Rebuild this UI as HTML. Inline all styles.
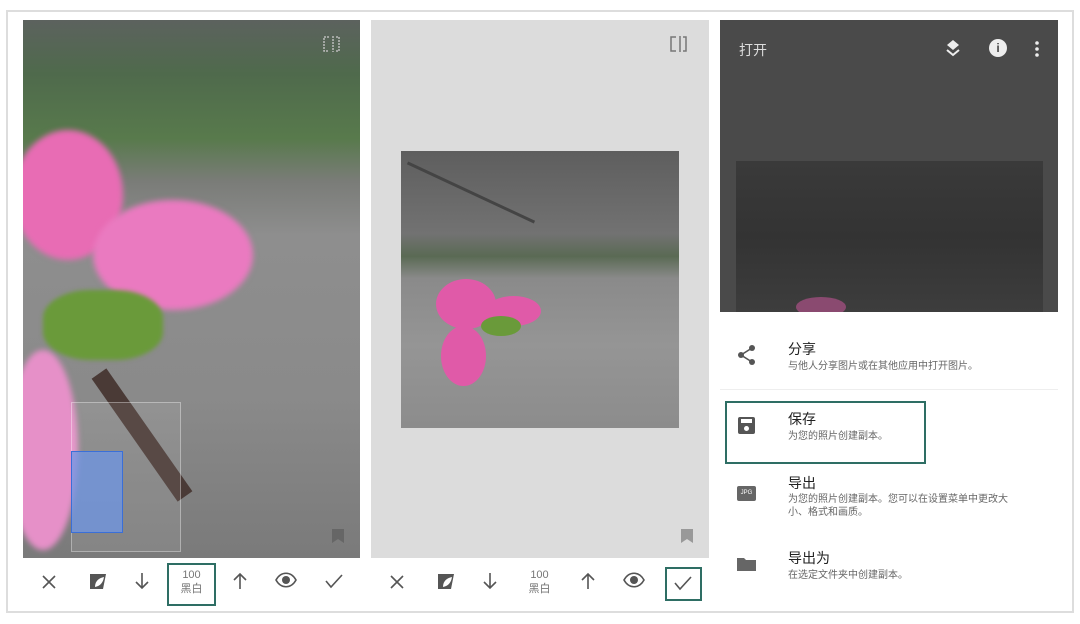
<!DOCTYPE html>
<html><head><meta charset="utf-8"><style>
*{margin:0;padding:0;box-sizing:border-box}
body{width:1080px;height:624px;background:#fff;position:relative;overflow:hidden;font-family:"Liberation Sans","Noto Sans CJK SC",sans-serif}
.a{position:absolute}
.frame{left:6px;top:10px;width:1068px;height:603px;border:2px solid #ddd}
.p1{left:23px;top:20px;width:337px;height:538px;overflow:hidden;background:linear-gradient(180deg,#5c625e 0%,#4f6a4c 10%,#587a4c 22%,#7a7c78 30%,#8e8e8e 40%,#8a8a8a 70%,#7a7a7a 100%)}
.p2{left:371px;top:20px;width:338px;height:538px;background:#dcdcdc}
.img2{left:401px;top:151px;width:278px;height:277px;overflow:hidden;background:linear-gradient(180deg,#5e5e5e 0%,#727272 30%,#5a6a54 38%,#8a8a8a 46%,#959595 70%,#8c8c8c 100%)}
.p3{left:720px;top:20px;width:338px;height:292px;background:#4a4a4a}
.img3{left:736px;top:161px;width:307px;height:151px;overflow:hidden;background:linear-gradient(180deg,#3a3a3a,#333 50%,#3d3d3d)}
.pk{border-radius:50%;background:#e05aa8}
.menu .t{font-size:14px;color:#222}
.menu .s{font-size:10px;color:#666;line-height:13px}
.box{border:2px solid #2e6e64}
svg{position:absolute}
</style></head><body>
<div class="a frame"></div>
<div class="a p1">
 <div class="a pk" style="left:-10px;top:110px;width:110px;height:130px;background:#e86cb4;filter:blur(3px)"></div>
 <div class="a pk" style="left:70px;top:180px;width:160px;height:110px;background:#ea7ac0;filter:blur(3px)"></div>
 <div class="a pk" style="left:-15px;top:330px;width:70px;height:200px;background:#e690c8;filter:blur(3px)"></div>
 <div class="a" style="left:20px;top:270px;width:120px;height:70px;background:#6a9a3a;border-radius:40%;filter:blur(2px)"></div>
 <div class="a" style="left:110px;top:340px;width:18px;height:150px;background:#4a3a36;transform:rotate(-35deg)"></div>
 <div class="a" style="left:48px;top:382px;width:110px;height:150px;border:1px solid rgba(255,255,255,.35);background:rgba(255,255,255,.08)"></div>
 <div class="a" style="left:48px;top:431px;width:52px;height:82px;background:rgba(110,150,230,.75);border:1px solid #3a6fd8"></div>
 <svg style="left:298px;top:15px" width="20" height="18"><path d="M8 2H3v14h5M12 1v16M15 2h3v14h-3" stroke="#bbb" stroke-width="1.5" fill="none" stroke-dasharray="2 1"/></svg>
 <svg style="left:308px;top:508px" width="14" height="16"><path d="M1 1h12v14l-6-4-6 4z" fill="#666"/></svg>
</div>
<div class="a p2">
 <svg style="left:297px;top:15px" width="20" height="18"><path d="M8 2H3v14h5M12 1v16M15 2h3v14h-3" stroke="#777" stroke-width="1.5" fill="none"/></svg>
 <svg style="left:309px;top:508px" width="14" height="16"><path d="M1 1h12v14l-6-4-6 4z" fill="#999"/></svg>
</div>
<div class="a img2">
 <div class="a" style="left:0;top:40px;width:140px;height:3px;background:#444;transform:rotate(25deg)"></div>
 <div class="a pk" style="left:35px;top:128px;width:60px;height:50px"></div>
 <div class="a pk" style="left:85px;top:145px;width:55px;height:30px"></div>
 <div class="a pk" style="left:40px;top:175px;width:45px;height:60px"></div>
 <div class="a" style="left:80px;top:165px;width:40px;height:20px;background:#6a9a3a;border-radius:50%"></div>
</div>
<div class="a p3">
 <div class="a" style="left:19px;top:20px;color:#ddd;font-size:14px">打开</div>
 <svg style="left:224px;top:18px" width="18" height="22"><path d="M3 7l6-5 6 5-6 5z" fill="#eee"/><path d="M3 12l6 5 6-5" stroke="#eee" stroke-width="2" fill="none"/></svg>
 <div class="a" style="left:269px;top:19px;width:18px;height:18px;border-radius:50%;background:#eee;color:#4a4a4a;font-size:12px;font-weight:bold;text-align:center;line-height:18px">i</div>
 <svg style="left:314px;top:20px" width="6" height="18"><circle cx="3" cy="3" r="1.8" fill="#eee"/><circle cx="3" cy="9" r="1.8" fill="#eee"/><circle cx="3" cy="15" r="1.8" fill="#eee"/></svg>
</div>
<div class="a img3"><div class="a pk" style="left:60px;top:136px;width:50px;height:20px;background:#8a4a70"></div></div>

<div class="menu">
 <svg style="left:737px;top:344px" width="20" height="22"><circle cx="15" cy="4" r="3" fill="#555"/><circle cx="4" cy="11" r="3" fill="#555"/><circle cx="15" cy="18" r="3" fill="#555"/><path d="M15 4L4 11l11 7" stroke="#555" stroke-width="1.6" fill="none"/></svg>
 <div class="a t" style="left:788px;top:339px">分享</div>
 <div class="a s" style="left:788px;top:360px">与他人分享图片或在其他应用中打开图片。</div>
 <div class="a" style="left:720px;top:389px;width:338px;height:1px;background:#eee"></div>
 <div class="a box" style="left:725px;top:401px;width:201px;height:63px"></div>
 <div class="a" style="left:738px;top:417px;width:17px;height:17px;background:#555;border-radius:2px"><div class="a" style="left:3px;top:2px;width:11px;height:4px;background:#fff"></div><div class="a" style="left:6px;top:9px;width:5px;height:5px;border-radius:50%;background:#fff"></div></div>
 <div class="a t" style="left:788px;top:409px">保存</div>
 <div class="a s" style="left:788px;top:430px">为您的照片创建副本。</div>
 <div class="a" style="left:737px;top:486px;width:19px;height:15px;background:#666;color:#fff;font-size:6px;text-align:center;line-height:15px;border-radius:2px">JPG</div>
 <div class="a t" style="left:788px;top:473px">导出</div>
 <div class="a s" style="left:788px;top:493px;width:260px">为您的照片创建副本。您可以在设置菜单中更改大<br>小、格式和画质。</div>
 <svg style="left:736px;top:556px" width="21" height="16"><path d="M1 2h7l2 2h10v11H1z" fill="#666"/></svg>
 <div class="a t" style="left:788px;top:548px">导出为</div>
 <div class="a s" style="left:788px;top:569px">在选定文件夹中创建副本。</div>
</div>

<!-- toolbar 1 -->
<svg style="left:41px;top:574px" width="16" height="16"><path d="M2 2l12 12M14 2L2 14" stroke="#555" stroke-width="1.6"/></svg>
<svg style="left:88px;top:572px" width="20" height="19"><path d="M2 2h16l-3 15H2z" fill="#555"/><path d="M7 15c0-6 4-9 9-10-1 6-4 9-9 10z" fill="#fff"/></svg>
<svg style="left:135px;top:572px" width="14" height="18"><path d="M7 1v15M1 10l6 6 6-6" stroke="#555" stroke-width="1.6" fill="none"/></svg>
<div class="a box" style="left:167px;top:563px;width:49px;height:43px"></div>
<div class="a" style="left:167px;top:568px;width:49px;text-align:center;font-size:11px;color:#777;line-height:14px">100<br>黑白</div>
<svg style="left:233px;top:572px" width="14" height="18"><path d="M7 17V2M1 8l6-6 6 6" stroke="#555" stroke-width="1.6" fill="none"/></svg>
<svg style="left:275px;top:572px" width="22" height="16"><path d="M1 8c5-9 15-9 20 0-5 9-15 9-20 0z" stroke="#555" stroke-width="1.6" fill="none"/><circle cx="11" cy="8" r="4" fill="#555"/></svg>
<svg style="left:325px;top:573px" width="18" height="16"><path d="M1 8l5 6L17 2" stroke="#555" stroke-width="1.6" fill="none"/></svg>
<!-- toolbar 2 -->
<svg style="left:389px;top:574px" width="16" height="16"><path d="M2 2l12 12M14 2L2 14" stroke="#555" stroke-width="1.6"/></svg>
<svg style="left:436px;top:572px" width="20" height="19"><path d="M2 2h16l-3 15H2z" fill="#555"/><path d="M7 15c0-6 4-9 9-10-1 6-4 9-9 10z" fill="#fff"/></svg>
<svg style="left:483px;top:572px" width="14" height="18"><path d="M7 1v15M1 10l6 6 6-6" stroke="#555" stroke-width="1.6" fill="none"/></svg>
<div class="a" style="left:515px;top:568px;width:49px;text-align:center;font-size:11px;color:#777;line-height:14px">100<br>黑白</div>
<svg style="left:581px;top:572px" width="14" height="18"><path d="M7 17V2M1 8l6-6 6 6" stroke="#555" stroke-width="1.6" fill="none"/></svg>
<svg style="left:623px;top:572px" width="22" height="16"><path d="M1 8c5-9 15-9 20 0-5 9-15 9-20 0z" stroke="#555" stroke-width="1.6" fill="none"/><circle cx="11" cy="8" r="4" fill="#555"/></svg>
<div class="a box" style="left:665px;top:567px;width:37px;height:34px"></div>
<svg style="left:674px;top:575px" width="18" height="16"><path d="M1 8l5 6L17 2" stroke="#555" stroke-width="1.6" fill="none"/></svg>
</body></html>
